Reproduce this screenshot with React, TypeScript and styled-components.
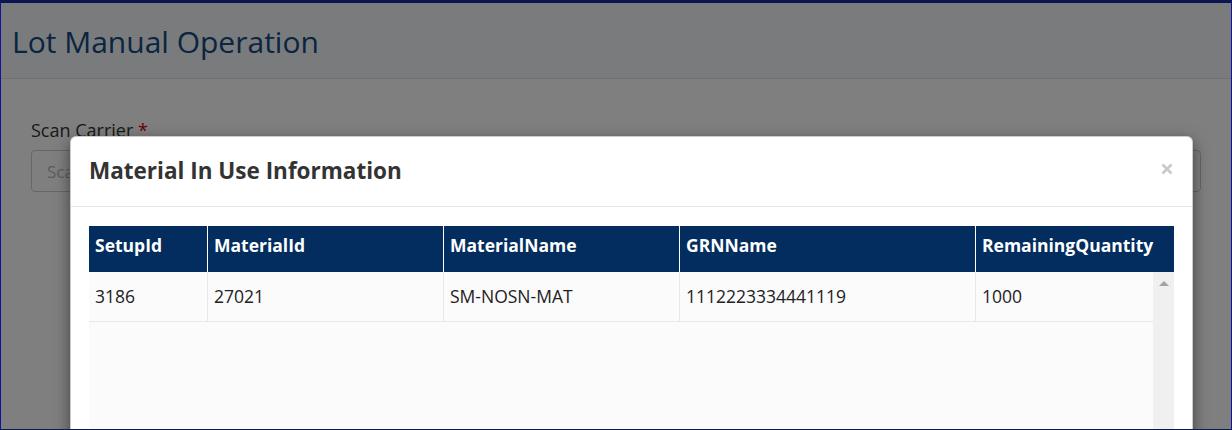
import React from "react";
import styled, { createGlobalStyle } from "styled-components";

const GlobalStyle = createGlobalStyle`
  html, body { margin: 0; padding: 0; }
  body { font-family: "Open Sans", "Noto Sans", sans-serif; background: #fff; }
  * { box-sizing: border-box; }
`;

const Frame = styled.div`
  position: relative;
  width: 1232px;
  height: 430px;
  overflow: hidden;
  background: #ffffff;
  border-top: 3px solid #0b1650;
  border-left: 1px solid #12129a;
  border-right: 1px solid #12129a;
  border-bottom: 1px solid #0d1a5a;
`;

const PageHeader = styled.header`
  height: 76px;
  background: #f5f7fb;
  border-bottom: 1px solid #e2e2e2;
  padding: 19px 0 0 11px;
`;

const PageTitle = styled.h1`
  margin: 0;
  font-weight: 400;
  font-size: 30px;
  line-height: 40px;
  color: #144a80;
`;

const Content = styled.main`
  padding: 39px 30px 0 30px;
`;

const Label = styled.label`
  display: block;
  font-size: 18px;
  line-height: 24px;
  color: #333;
`;

const Required = styled.span`
  color: #d40000;
`;

const Input = styled.input`
  display: block;
  margin-top: 8px;
  width: 100%;
  height: 42px;
  border: 1px solid #cfcfcf;
  border-radius: 4px;
  padding: 0 15px;
  font-family: inherit;
  font-size: 17px;
  background: #fff;
  &::placeholder { color: #b8b8b8; }
`;

const Backdrop = styled.div`
  position: absolute;
  inset: 0;
  background: rgba(0, 0, 0, 0.5);
  padding: 133px 38px 0 69px;
`;

const Dialog = styled.div`
  width: 1123px;
  height: 420px;
  background: #fff;
  border: 1px solid rgba(0, 0, 0, 0.2);
  border-radius: 6px;
  box-shadow: 0 5px 15px rgba(0, 0, 0, 0.5);
  display: flex;
  flex-direction: column;
`;

const DialogHeader = styled.div`
  height: 70px;
  display: flex;
  align-items: center;
  justify-content: space-between;
  padding: 0 19px 0 18px;
  border-bottom: 1px solid #e5e5e5;
`;

const DialogTitle = styled.h4`
  margin: 0;
  font-size: 22.5px;
  font-weight: 700;
  color: #333;
  line-height: 32px;
  margin-top: -2px;
`;

const CloseButton = styled.button`
  border: 0;
  background: transparent;
  padding: 0;
  width: 12px;
  height: 12px;
  display: flex;
  cursor: pointer;
  margin-top: -6px;
`;

const DialogBody = styled.div`
  padding: 19px 18px 0 18px;
  flex: 1;
  display: flex;
  flex-direction: column;
`;

const cols = "118px 236px 236px 296px";

const HeadRow = styled.div`
  display: grid;
  grid-template-columns: ${cols} 199px;
  height: 46px;
  background: #022d5e;
`;

const HeadCell = styled.div<{ $first?: boolean }>`
  color: #fff;
  font-weight: 700;
  font-size: 17.5px;
  line-height: 24px;
  padding: 7px 6px 0;
  border-left: ${(p) => (p.$first ? "0" : "1px solid #ffffff")};
  white-space: nowrap;
`;

const ScrollBody = styled.div`
  flex: 1;
  display: flex;
  background: #fbfbfb;
`;

const Rows = styled.div`
  flex: 1;
`;

const BodyRow = styled.div`
  display: grid;
  grid-template-columns: ${cols} 1fr;
  height: 50px;
  border-bottom: 1px solid #e8e8e8;
`;

const BodyCell = styled.div<{ $first?: boolean }>`
  font-size: 17.5px;
  line-height: 24px;
  color: #222;
  padding: 12px 6px 0;
  border-left: ${(p) => (p.$first ? "0" : "1px solid #e8e8e8")};
  white-space: nowrap;
`;

const Scrollbar = styled.div`
  width: 21px;
  background: #f0f0f0;
  display: flex;
  justify-content: center;
`;

const ArrowUp = styled.div`
  margin-top: 9px;
  width: 0;
  height: 0;
  border-left: 5px solid transparent;
  border-right: 5px solid transparent;
  border-bottom: 5px solid #a3a3a3;
`;

const headers = ["SetupId", "MaterialId", "MaterialName", "GRNName", "RemainingQuantity"];
const rows = [["3186", "27021", "SM-NOSN-MAT", "1112223334441119", "1000"]];

export default function App() {
  return (
    <>
      <GlobalStyle />
      <Frame>
        <PageHeader>
          <PageTitle>Lot Manual Operation</PageTitle>
        </PageHeader>
        <Content>
          <Label>
            Scan Carrier <Required>*</Required>
          </Label>
          <Input placeholder="Scan Carrier" />
        </Content>
        <Backdrop>
          <Dialog>
            <DialogHeader>
              <DialogTitle>Material In Use Information</DialogTitle>
              <CloseButton aria-label="Close">
                <svg width="12" height="12" viewBox="0 0 12 12">
                  <path d="M1.5 1.5 L10.5 10.5 M10.5 1.5 L1.5 10.5" stroke="#c9c9c9" strokeWidth="2.6" strokeLinecap="butt" />
                </svg>
              </CloseButton>
            </DialogHeader>
            <DialogBody>
              <HeadRow>
                {headers.map((h, i) => (
                  <HeadCell key={h} $first={i === 0}>{h}</HeadCell>
                ))}
              </HeadRow>
              <ScrollBody>
                <Rows>
                  {rows.map((r, ri) => (
                    <BodyRow key={ri}>
                      {r.map((c, i) => (
                        <BodyCell key={i} $first={i === 0}>{c}</BodyCell>
                      ))}
                    </BodyRow>
                  ))}
                </Rows>
                <Scrollbar>
                  <ArrowUp />
                </Scrollbar>
              </ScrollBody>
            </DialogBody>
          </Dialog>
        </Backdrop>
      </Frame>
    </>
  );
}
